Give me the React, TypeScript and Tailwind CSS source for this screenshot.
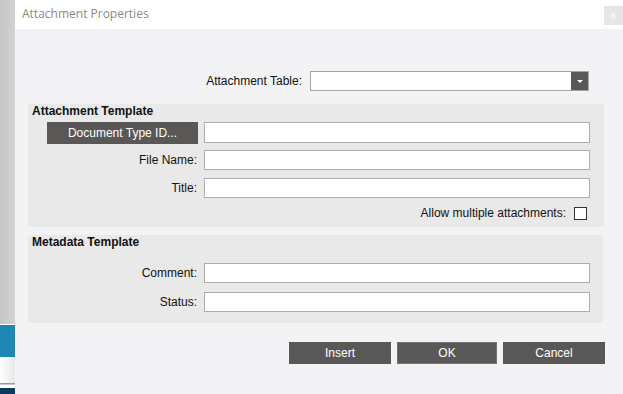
const font = { fontFamily: '"Liberation Sans", Arial, sans-serif' };

const Field = ({ label, pr = "pr-[14px]" }: { label: string; pr?: string }) => (
  <div className={`flex items-center justify-end ${pr}`}>
    <span className="text-[12px] text-[#111] mr-[7px]">{label}</span>
    <div className="w-[386px] h-[20px] bg-white border border-[#adadad]" />
  </div>
);

const DarkButton = ({ label, w, ok }: { label: string; w: string; ok?: boolean }) => (
  <button
    className={`${w} h-[22px] bg-[#5a5856] text-white text-[12px] ${ok ? "border border-[#75736f]" : ""}`}
  >
    {label}
  </button>
);

export default function App() {
  return (
    <div className="flex w-[623px] h-[394px] overflow-hidden" style={font}>
      <div className="w-[15px] flex flex-col">
        <div className="h-[324px] bg-gradient-to-r from-[#c6c6c6] to-[#d2d2d2]" />
        <div className="h-px bg-white" />
        <div className="h-[32px] bg-[#1f87b3]" />
        <div className="h-[26px] bg-gradient-to-r from-white to-[#e8e8e8]" />
        <div className="h-px bg-[#9a9a9a]" />
        <div className="h-px bg-[#c9c9d6]" />
        <div className="h-[3px] bg-white" />
        <div className="flex-1 bg-[#0b3a5c]" />
      </div>
      <div className="flex-1 flex flex-col bg-[#f3f3f5]">
        <div className="h-[29px] bg-white flex items-start justify-between">
          <span
            className="ml-[7px] mt-[6px] text-[12px] text-[#8a8a8a] leading-[16px]"
            style={{ fontFamily: '"Open Sans", "Noto Sans", sans-serif' }}
          >
            Attachment Properties
          </span>
          <div className="mt-[6px] w-[19px] h-[19px] bg-[#e6e6e6] flex items-center justify-center text-white text-[10px] leading-none">
            x
          </div>
        </div>

        <div className="flex items-center justify-end mt-[42px] pr-[34px]">
          <span className="text-[12px] text-[#111] mr-[8px]">Attachment Table:</span>
          <div className="w-[279px] h-[20px] bg-white border border-[#a5a5a5] flex justify-end">
            <div className="w-[17px] h-full bg-[#5a5856] flex items-center justify-center">
              <svg width="6" height="3" viewBox="0 0 6 3">
                <path d="M0 0H6L3 3Z" fill="#fff" />
              </svg>
            </div>
          </div>
        </div>

        <div className="ml-[13px] mt-[13px] w-[576px] bg-[#e9e9e9] rounded-[3px] pb-[5px]">
          <div className="pl-[4px] text-[12px] font-bold text-[#111] leading-[14px]">Attachment Template</div>
          <div className="flex items-start mt-[4px] pl-[19px]">
            <DarkButton label="Document Type ID..." w="w-[151px]" />
            <div className="ml-[6px] w-[386px] h-[21px] bg-white border border-[#adadad]" />
          </div>
          <div className="mt-[6px]">
            <Field label="File Name:" />
          </div>
          <div className="mt-[8px]">
            <Field label="Title:" />
          </div>
          <div className="flex items-center justify-end mt-[6px] pr-[17px]">
            <span className="text-[12px] text-[#111] mr-[8px]">Allow multiple attachments:</span>
            <div className="w-[13px] h-[13px] bg-white border border-[#333]" />
          </div>
        </div>

        <div className="ml-[13px] mt-[8px] w-[575px] bg-[#e9e9e9] rounded-[3px] pb-[11px]">
          <div className="pl-[4px] text-[12px] font-bold text-[#111] leading-[14px]">Metadata Template</div>
          <div className="mt-[14px]">
            <Field label="Comment:" pr="pr-[13px]" />
          </div>
          <div className="mt-[9px]">
            <Field label="Status:" pr="pr-[13px]" />
          </div>
        </div>

        <div className="flex justify-end gap-[6px] mt-[19px] pr-[18px]">
          <DarkButton label="Insert" w="w-[102px]" />
          <DarkButton label="OK" w="w-[100px]" ok />
          <DarkButton label="Cancel" w="w-[102px]" />
        </div>
      </div>
    </div>
  );
}
